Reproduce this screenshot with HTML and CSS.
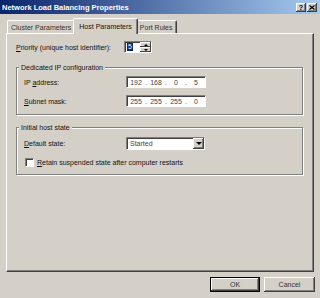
FILE: index.html
```html
<!DOCTYPE html>
<html lang="en">
<head>
    <meta charset="UTF-8">
    <title>Network Load Balancing Properties</title>
    <link rel="stylesheet" href="styles.css">
</head>
<body>
    <div class="titlebar">
        <span class="title">Network Load Balancing Properties</span>
        <div class="title-buttons">
            <span class="tbtn">?</span>
            <span class="tbtn">
                <svg width="6" height="5" viewBox="0 0 6 5"><path d="M0.5 0.5 L5.5 4.5 M5.5 0.5 L0.5 4.5" stroke="#000" stroke-width="1.2"/></svg>
            </span>
        </div>
    </div>
    <div class="tabs">
        <div class="tab">Cluster Parameters</div>
        <div class="tab active">Host Parameters</div>
        <div class="tab">Port Rules</div>
    </div>
    <div class="panel">
        <div class="row priority">
            <label class="lbl"><u>P</u>riority (unique host identifier):</label>
            <div class="spin">
                <span class="spin-value"><span class="sel">5</span></span>
                <span class="spin-btns">
                    <span class="sb"><span class="arrow-up"></span></span>
                    <span class="sb"><span class="arrow-down"></span></span>
                </span>
            </div>
        </div>
        <fieldset class="group">
            <legend>Dedicated IP configuration</legend>
            <div class="row first">
                <label class="lbl">IP <u>a</u>ddress:</label>
                <div class="ipbox">
                    <span class="oct">192</span><span class="dot">.</span><span class="oct">168</span><span class="dot">.</span><span class="oct">0</span><span class="dot">.</span><span class="oct">5</span>
                </div>
            </div>
            <div class="row second">
                <label class="lbl"><u>S</u>ubnet mask:</label>
                <div class="ipbox">
                    <span class="oct">255</span><span class="dot">.</span><span class="oct">255</span><span class="dot">.</span><span class="oct">255</span><span class="dot">.</span><span class="oct">0</span>
                </div>
            </div>
        </fieldset>
        <fieldset class="group host-state">
            <legend>Initial host state</legend>
            <div class="row first">
                <label class="lbl"><u>D</u>efault state:</label>
                <div class="combo">
                    <span class="combo-value">Started</span>
                    <span class="combo-btn"><span class="arrow-down big"></span></span>
                </div>
            </div>
            <div class="row check-row">
                <span class="checkbox"></span>
                <label><u>R</u>etain suspended state after computer restarts</label>
            </div>
        </fieldset>
    </div>
    <div class="buttons">
        <button class="btn default">OK</button>
        <button class="btn">Cancel</button>
    </div>
</body>
</html>
```

FILE: styles.css
```css
body {
    margin: 0;
    width: 320px;
    height: 298px;
    overflow: hidden;
    background-color: #d4d0c8;
    font-family: "Liberation Sans", Arial, sans-serif;
    font-size: 7px;
    color: #111111;
}
.titlebar {
    display: flex;
    align-items: center;
    height: 14px;
    padding: 0 3px 0 2px;
    box-sizing: border-box;
    background: linear-gradient(to right, #0a246a, #a6caf0);
    color: #ffffff;
    font-weight: bold;
    font-size: 7.5px;
}
.title-buttons {
    margin-left: auto;
    display: flex;
    gap: 1px;
}
.tbtn {
    width: 10px;
    height: 9px;
    display: flex;
    align-items: center;
    justify-content: center;
    background-color: #d4d0c8;
    box-shadow: inset -1px -1px #404040, inset 1px 1px #ffffff, inset -2px -2px #808080;
    color: #000000;
    font-size: 7px;
}
.tabs {
    display: flex;
    align-items: flex-end;
    height: 19px;
    padding-left: 7px;
}
.tab {
    display: flex;
    align-items: center;
    height: 13px;
    padding: 0 3px;
    box-sizing: border-box;
    border: 1px solid;
    border-color: #ffffff #404040 transparent #ffffff;
    border-bottom: none;
    border-radius: 2px 2px 0 0;
    box-shadow: inset -1px 0 #808080;
    color: #333333;
}
.tab.active {
    position: relative;
    z-index: 1;
    height: 16px;
    margin: 0 -2px -1px;
    padding: 0 5px;
    background-color: #d4d0c8;
    color: #111111;
}
.panel {
    height: 239px;
    margin: 0 6px;
    padding: 7px 9px 0;
    box-sizing: border-box;
    border: 1px solid;
    border-color: #ffffff #404040 #404040 #ffffff;
    box-shadow: inset -1px -1px #808080;
}
.row {
    display: flex;
    align-items: center;
}
.lbl {
    width: 102px;
    flex: none;
}
.priority .lbl {
    width: 108px;
}
.spin {
    display: flex;
    width: 28px;
    height: 12px;
    box-sizing: border-box;
    border: 1px solid;
    border-color: #808080 #ffffff #ffffff #808080;
    box-shadow: inset 1px 1px #404040;
    background-color: #ffffff;
}
.spin-value {
    flex: 1;
    display: flex;
    align-items: center;
    padding-left: 2px;
}
.sel {
    background-color: #0a246a;
    color: #ffffff;
    padding: 0 1px;
    line-height: 8px;
}
.spin-btns {
    display: flex;
    flex-direction: column;
    width: 11px;
}
.sb {
    flex: 1;
    display: flex;
    align-items: center;
    justify-content: center;
    background-color: #d4d0c8;
    box-shadow: inset -1px -1px #404040, inset 1px 1px #ffffff;
}
.arrow-up {
    border-left: 2px solid transparent;
    border-right: 2px solid transparent;
    border-bottom: 2px solid #000000;
}
.arrow-down {
    border-left: 2px solid transparent;
    border-right: 2px solid transparent;
    border-top: 2px solid #000000;
}
.arrow-down.big {
    border-left-width: 3px;
    border-right-width: 3px;
    border-top-width: 3px;
}
.group {
    margin: 10px 1px 0 0;
    padding: 0 0 7px 7px;
    min-width: 0;
    border: 1px solid #808080;
    box-shadow: 1px 1px 0 #ffffff, inset 1px 1px 0 #ffffff;
}
.group legend {
    margin-left: -5px;
    padding: 0 2px;
    line-height: 9px;
    background-color: #d4d0c8;
}
.group .first {
    margin-top: 4px;
}
.group .second {
    margin-top: 7px;
}
.host-state {
    margin-top: 8px;
}
.host-state .first {
    margin-top: 5px;
}
.ipbox {
    display: flex;
    align-items: center;
    width: 80px;
    height: 12px;
    box-sizing: border-box;
    border: 1px solid;
    border-color: #808080 #ffffff #ffffff #808080;
    box-shadow: inset 1px 1px #404040;
    background-color: #ffffff;
    color: #444444;
}
.oct {
    width: 18px;
    text-align: center;
}
.dot {
    width: 2px;
    text-align: center;
}
.combo {
    display: flex;
    width: 79px;
    height: 13px;
    box-sizing: border-box;
    border: 1px solid;
    border-color: #808080 #ffffff #ffffff #808080;
    box-shadow: inset 1px 1px #404040;
    background-color: #ffffff;
}
.combo-value {
    flex: 1;
    display: flex;
    align-items: center;
    padding-left: 3px;
    color: #444444;
}
.combo-btn {
    width: 11px;
    display: flex;
    align-items: center;
    justify-content: center;
    background-color: #d4d0c8;
    box-shadow: inset -1px -1px #404040, inset 1px 1px #ffffff, inset -2px -2px #808080;
}
.check-row {
    margin-top: 8px;
    padding-left: 1px;
    gap: 3px;
}
.checkbox {
    width: 9px;
    height: 9px;
    box-sizing: border-box;
    border: 1px solid;
    border-color: #808080 #ffffff #ffffff #808080;
    box-shadow: inset 1px 1px #404040;
    background-color: #ffffff;
}
.buttons {
    display: flex;
    justify-content: flex-end;
    gap: 4px;
    padding: 5px 5px 0 0;
}
.btn {
    width: 50px;
    height: 15px;
    padding: 0;
    border: none;
    background-color: #d4d0c8;
    box-shadow: inset -1px -1px #404040, inset 1px 1px #ffffff, inset -2px -2px #808080;
    font-family: inherit;
    font-size: 7px;
    color: #333333;
}
.btn.default {
    border: 1px solid #000000;
}
.btn + .btn {
    width: 51px;
}
```
